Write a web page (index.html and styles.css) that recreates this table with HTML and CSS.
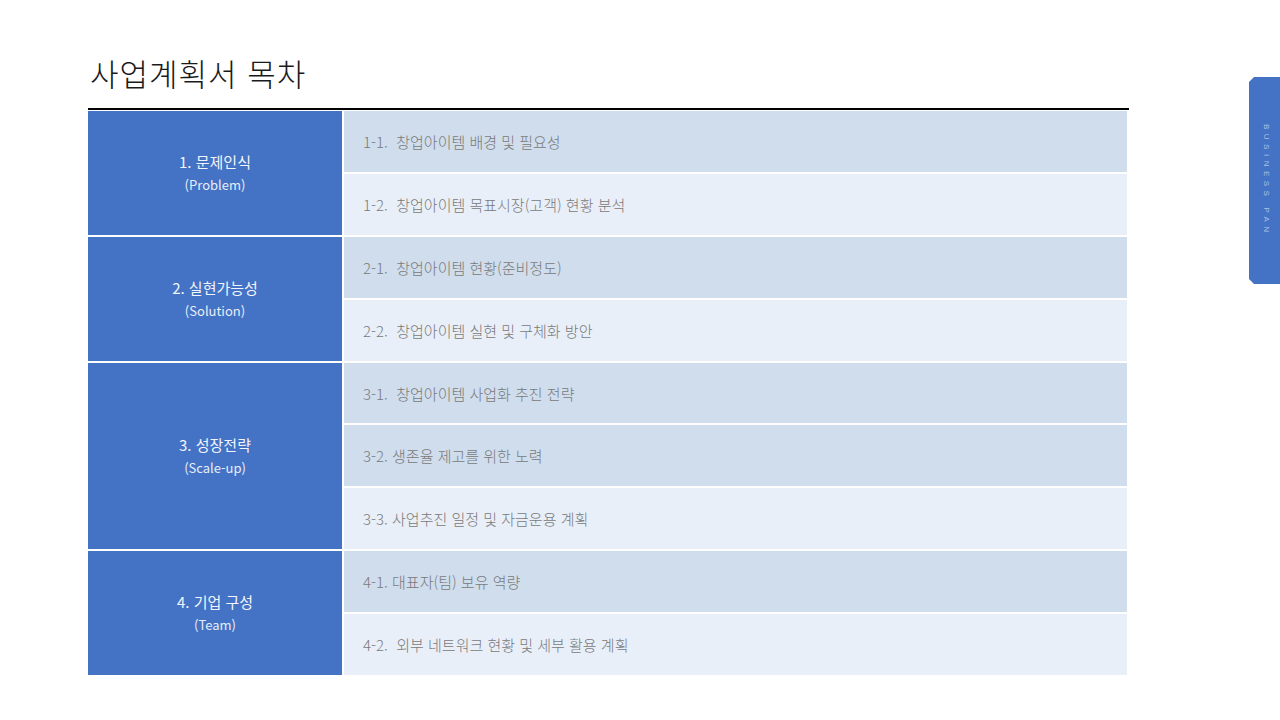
FILE: index.html
```html
<!DOCTYPE html>
<html lang="ko">
<head>
<meta charset="utf-8">
<title>사업계획서 목차</title>
<link rel="stylesheet" href="styles.css">
</head>
<body>
<div class="slide">
  <main class="content">
    <h1 class="title">사업계획서 목차</h1>
    <div class="rule"></div>
    <div class="toc">
      <div class="group g2"><span class="gname">1. 문제인식</span><span class="gsub">(Problem)</span></div>
      <div class="item dark">1-1.&nbsp; 창업아이템 배경 및 필요성</div>
      <div class="item light">1-2.&nbsp; 창업아이템 목표시장(고객) 현황 분석</div>

      <div class="group g2"><span class="gname">2. 실현가능성</span><span class="gsub">(Solution)</span></div>
      <div class="item dark">2-1.&nbsp; 창업아이템 현황(준비정도)</div>
      <div class="item light">2-2.&nbsp; 창업아이템 실현 및 구체화 방안</div>

      <div class="group g3"><span class="gname">3. 성장전략</span><span class="gsub">(Scale-up)</span></div>
      <div class="item dark">3-1.&nbsp; 창업아이템 사업화 추진 전략</div>
      <div class="item dark">3-2. 생존율 제고를 위한 노력</div>
      <div class="item light">3-3. 사업추진 일정 및 자금운용 계획</div>

      <div class="group g2"><span class="gname">4. 기업 구성</span><span class="gsub">(Team)</span></div>
      <div class="item dark">4-1. 대표자(팀) 보유 역량</div>
      <div class="item light">4-2.&nbsp; 외부 네트워크 현황 및 세부 활용 계획</div>
    </div>
  </main>
  <aside class="tab"><span class="tab-text">BUSINESS PAN</span></aside>
</div>
</body>
</html>
```
FILE: styles.css
```css
* { box-sizing: border-box; }
html, body { margin: 0; padding: 0; background: #fff; }
body {
  font-family: "Noto Sans CJK KR", "Noto Sans", sans-serif;
  color: #222;
}
.slide {
  position: relative;
  width: 1280px;
  height: 720px;
  overflow: hidden;
}
.content {
  padding: 53px 0 0 88px;
  width: 1130px;
}
.title {
  margin: 0 0 0 2px;
  font-size: 31px;
  font-weight: 300;
  line-height: 40px;
  height: 55px;
  color: #1a1a1a;
  letter-spacing: 1px;
}
.rule {
  width: 1041px;
  height: 2px;
  background: #000;
  margin-bottom: 1px;
}
.toc {
  display: grid;
  grid-template-columns: 254px 783px;
  grid-template-rows: repeat(9, 60.9px);
  column-gap: 2px;
  row-gap: 2px;
}
.group {
  background: #4472C4;
  color: #fff;
  display: flex;
  flex-direction: column;
  align-items: center;
  justify-content: center;
  padding-top: 1px;
}
.group.g2 { grid-row: span 2; }
.group.g3 { grid-row: span 3; }
.gname {
  font-size: 15px;
  line-height: 22px;
  font-weight: 400;
  color: #f2f5fb;
}
.gsub {
  font-size: 13px;
  line-height: 22px;
  margin-top: 1px;
  color: #e8eef8;
}
.item {
  display: flex;
  align-items: center;
  padding-left: 19px;
  font-size: 15px;
  font-weight: 300;
  color: #7a7a7a;
}
.item.dark { background: #CFDDED; }
.item.light { background: #E9EFF8; }
.tab {
  position: absolute;
  left: 1249px;
  top: 77px;
  width: 31px;
  height: 207px;
  background: #4472C4;
  clip-path: polygon(5px 0, 100% 0, 100% 100%, 5px 100%, 0 calc(100% - 5px), 0 5px);
  display: flex;
  justify-content: center;
  padding-top: 47px;
  padding-left: 2px;
}
.tab-text {
  writing-mode: vertical-rl;
  font-family: "Liberation Sans", "Noto Sans", sans-serif;
  font-size: 8px;
  letter-spacing: 4.5px;
  color: #a9c0e6;
  line-height: 1;
}
```
